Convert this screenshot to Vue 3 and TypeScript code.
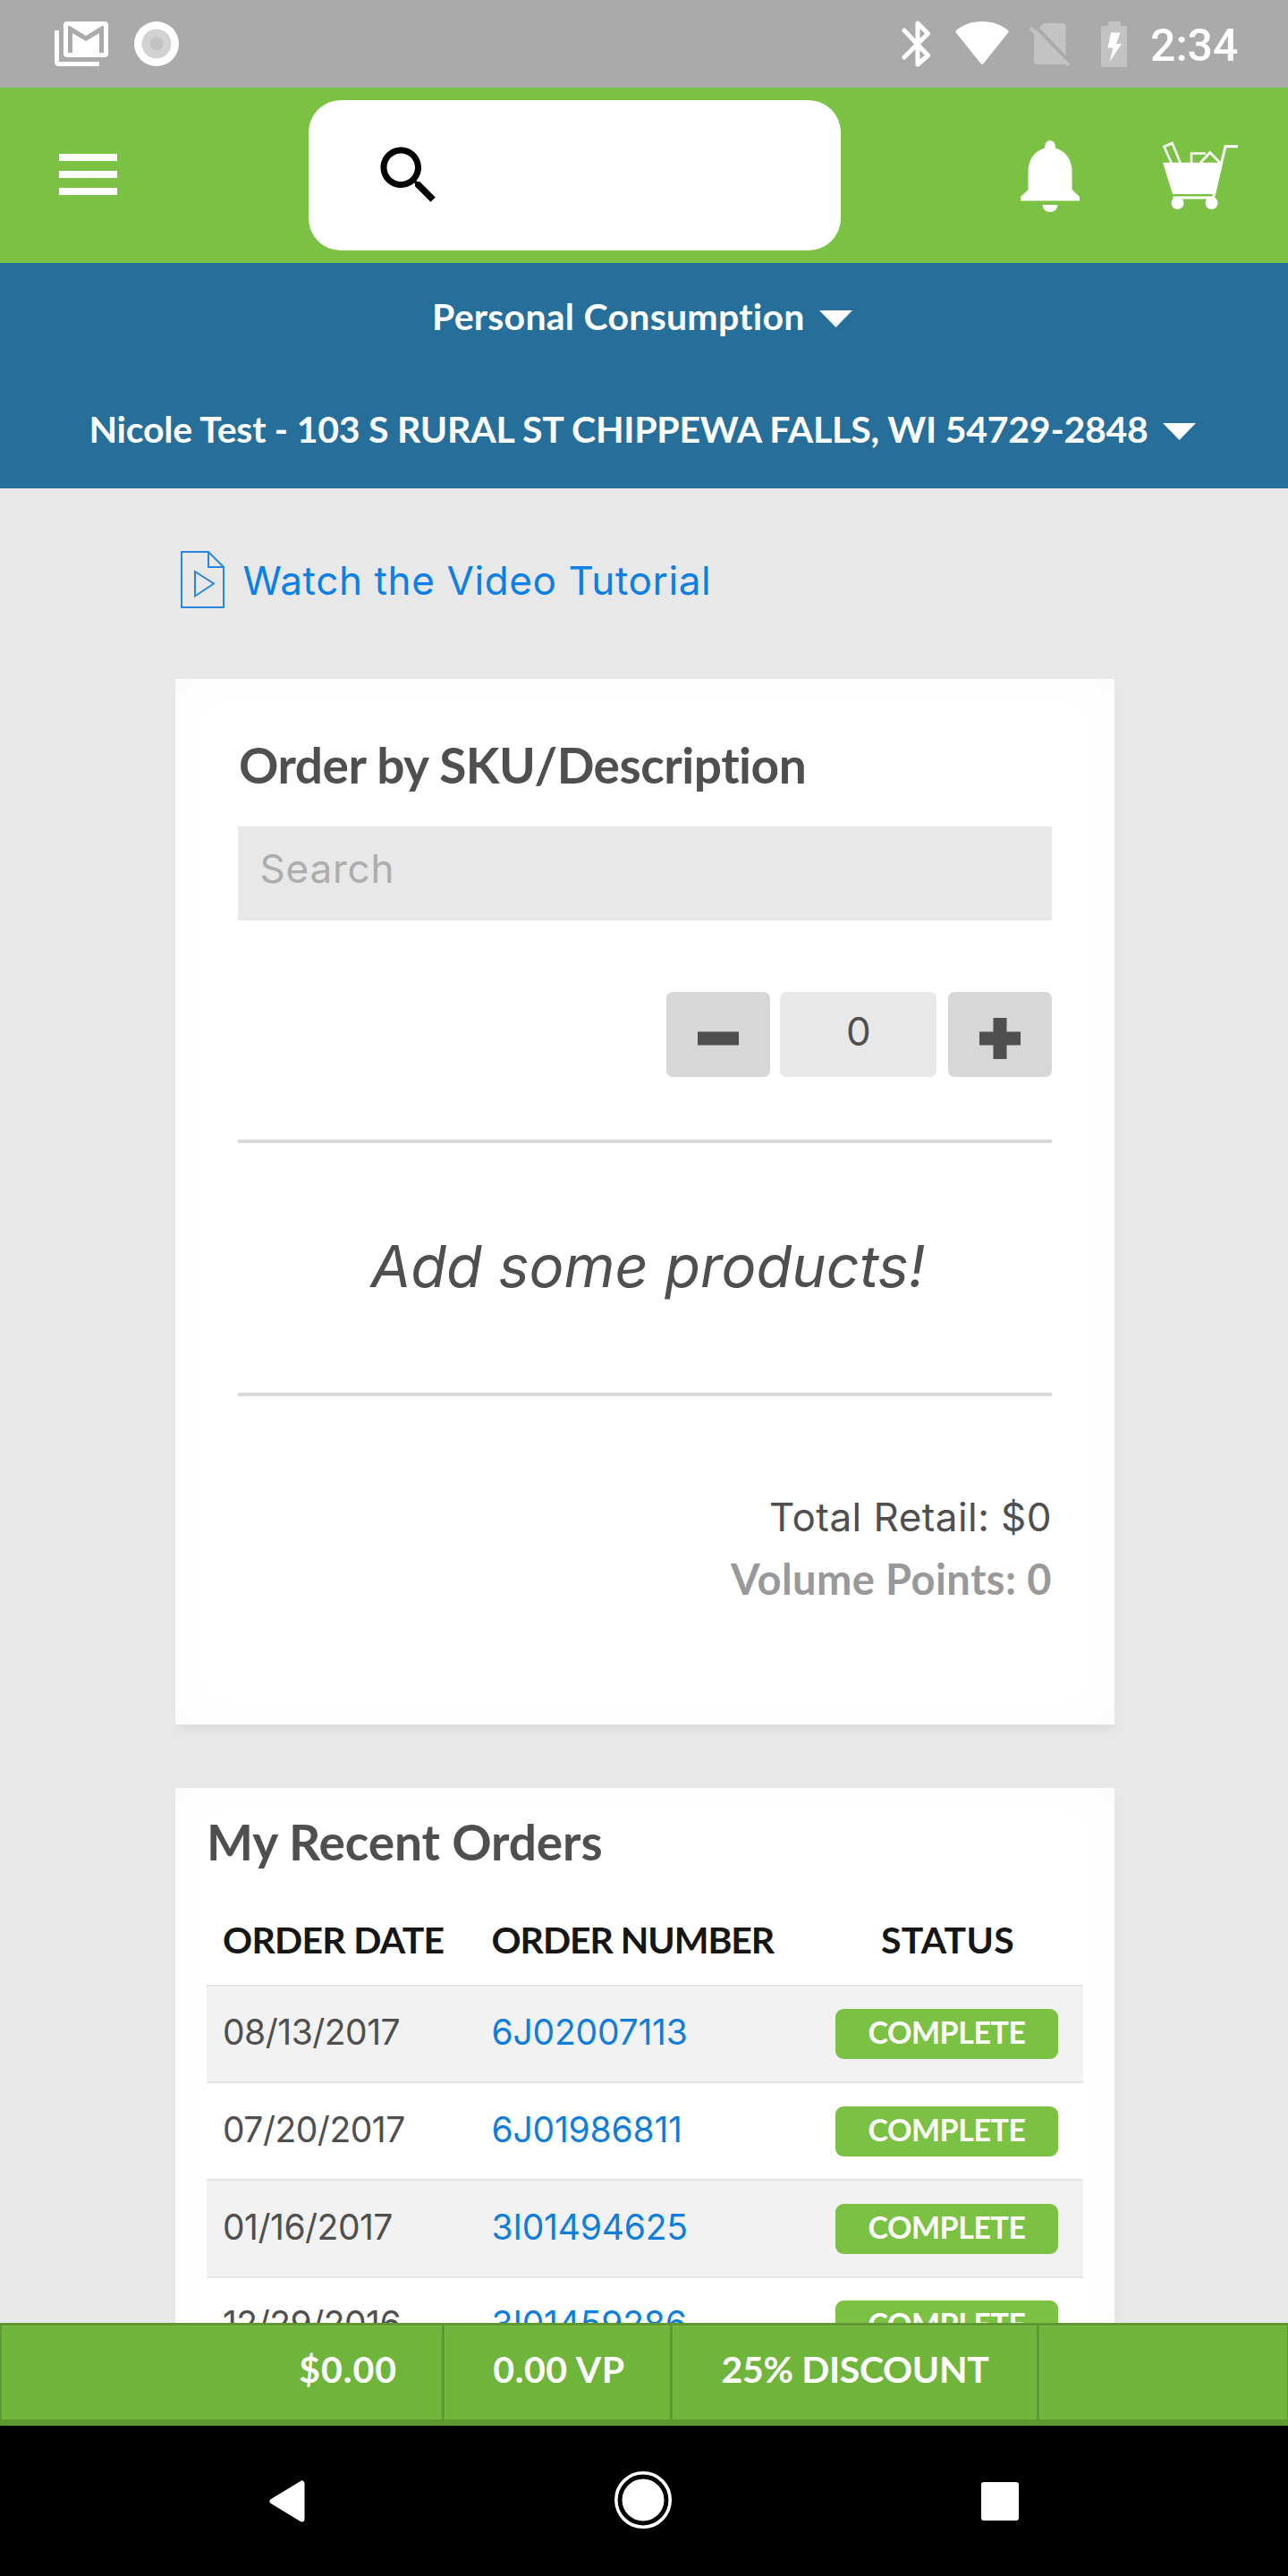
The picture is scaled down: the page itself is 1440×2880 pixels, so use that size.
<script setup lang="ts">
interface Order {
  date: string
  number: string
  status: string
}

const orders: Order[] = [
  { date: '08/13/2017', number: '6J02007113', status: 'COMPLETE' },
  { date: '07/20/2017', number: '6J01986811', status: 'COMPLETE' },
  { date: '01/16/2017', number: '3I01494625', status: 'COMPLETE' },
  { date: '12/29/2016', number: '3I01459286', status: 'COMPLETE' },
]
</script>

<template>
  <div class="screen">
    <div class="statusbar">
      <svg class="st-gmail" width="60" height="50" viewBox="61 24 60 50">
        <path d="M61 34h5v35h45v5H66q-5 0-5-5z" fill="#fff" />
        <rect x="71" y="24" width="50" height="40" rx="4" fill="#fff" />
        <path d="M76 59V29h2l18 11 18-11h2v30h-5V37L96 46 81 37v22z" fill="#aaa" />
      </svg>
      <svg class="st-record" width="50" height="50" viewBox="0 0 50 50">
        <circle cx="25" cy="25" r="25" fill="#fff" />
        <circle cx="25" cy="25" r="16.500" fill="#d2d2d2" />
        <circle cx="25" cy="25" r="7.500" fill="#c2c2c2" />
      </svg>
      <svg class="st-bt" width="32" height="52" viewBox="1008 23 32 52">
        <path d="M1011 34l26.500 28-11.500 10V26l11.500 11.500L1011 64" fill="none" stroke="#fff" stroke-width="5" stroke-linecap="round" stroke-linejoin="round" />
      </svg>
      <svg class="st-wifi" width="62" height="50" viewBox="1067 23 62 50">
        <path d="M1098 24c12 0 22 4 29 10q1 1 .5 2l-28 35q-1.500 1.500-3 0l-28-35q-.5-1 .5-2c7-6 17-10 29-10z" fill="#fff" />
      </svg>
      <svg class="st-sim" width="47" height="50" viewBox="1150 25 47 50">
        <path d="M1167 26h21q3.500 0 3.500 3.500v39q0 3.500-3.500 3.500h-28q-4 0-4-4V36z" fill="#c3c3c3" />
        <path d="M1156.500 28l40 42.500" stroke="#aaa" stroke-width="4" />
        <path d="M1152 31.500l43 41.500" stroke="#c3c3c3" stroke-width="4" />
      </svg>
      <svg class="st-batt" width="30" height="51" viewBox="1231 23 30 51">
        <path d="M1239 23h14v5h5q2 0 2 2v42q0 2-2 2h-25q-2 0-2-2V30q0-2 2-2h6z" fill="#c3c3c3" />
        <path d="M1242 35.500h10.500L1248 48h6l-13.500 20 4-15.500h-6z" fill="#fff" />
      </svg>
      <span class="clock">2:34</span>
    </div>

    <header class="topbar">
      <svg class="menu" width="65" height="46" viewBox="0 0 65 46">
        <path d="M0 0h65v8H0zM0 19h65v8H0zM0 38h65v8H0z" fill="#fff" />
      </svg>
      <div class="searchbox">
        <svg width="84" height="84" viewBox="0 0 24 24">
          <path d="M15.500 14h-.79l-.28-.27C15.410 12.590 16 11.110 16 9.500 16 5.910 13.090 3 9.500 3S3 5.910 3 9.500 5.910 16 9.500 16c1.610 0 3.090-.59 4.230-1.570l.27.28v.79l5 4.990L20.490 19l-4.990-5zm-6 0C7.010 14 5 11.990 5 9.500S7.010 5 9.500 5 14 7.010 14 9.500 11.990 14 9.500 14z" fill="#000" />
        </svg>
      </div>
      <svg class="bell" width="66" height="81" viewBox="1141 157 66 81">
        <path d="M1174 157c4 0 6 4 6 8.500 11 3 18.500 13 18.500 26V212l8.500 8v4.500h-66V220l8.500-8v-20.500c0-13 7.500-23 18.500-26 0-4.500 2-8.500 6-8.500z" fill="#fff" />
        <path d="M1165.500 229h17q-1 8-8.500 8t-8.500-8z" fill="#fff" />
      </svg>
      <svg class="cart" width="86" height="78" viewBox="1299 157 86 78">
        <g fill="none" stroke="#fff" stroke-width="2.600">
          <path d="M1310 183l-8.500-19 9-4 9.500 23" />
          <path d="M1332 182v-10.500h16M1342 182l10.700-11.500L1364 182M1342 182l8-8" />
          <path d="M1384 163.700h-14L1356.500 221h-45" stroke-width="3" />
        </g>
        <path d="M1300 181.700h67L1359 217h-48z" fill="#fff" />
        <circle cx="1316.500" cy="227" r="7" fill="#fff" />
        <circle cx="1354.500" cy="227" r="7" fill="#fff" />
      </svg>
    </header>

    <div class="account">
      <div class="acc-row type">
        <span>Personal Consumption</span>
        <svg width="37" height="19" viewBox="0 0 37 19"><path d="M0 0h37L18.500 19z" fill="#fff" /></svg>
      </div>
      <div class="acc-row address">
        <span>Nicole Test - 103 S RURAL ST CHIPPEWA FALLS, WI 54729-2848</span>
        <svg width="37" height="19" viewBox="0 0 37 19"><path d="M0 0h37L18.500 19z" fill="#fff" /></svg>
      </div>
    </div>

    <main class="content">
      <a class="tutorial">
        <svg width="50" height="64" viewBox="0 0 50 64" fill="none" stroke="#2a86dc" stroke-width="2">
          <path d="M1 1h30l17 17v45H1z" />
          <path d="M31 1v17h17" />
          <path d="M16 23v27.500L37 36.500z" />
        </svg>
        <span>Watch the Video Tutorial</span>
      </a>

      <section class="card order">
        <h2 class="order-title">Order by SKU/Description</h2>
        <div class="sku">Search</div>
        <div class="stepper">
          <button class="step" aria-label="Decrease">
            <svg width="46" height="46" viewBox="0 0 46 46"><path d="M0 15.500h46v15H0z" fill="#4f4f4f" /></svg>
          </button>
          <div class="qty">0</div>
          <button class="step" aria-label="Increase">
            <svg width="46" height="46" viewBox="0 0 46 46"><path d="M15.500 0h15v15.500H46v15H30.500V46h-15V30.500H0v-15h15.500z" fill="#4f4f4f" /></svg>
          </button>
        </div>
        <div class="empty">Add some products!</div>
        <div class="retail">Total Retail: $0</div>
        <div class="points">Volume Points: 0</div>
      </section>

      <section class="card recent">
        <h2 class="recent-title">My Recent Orders</h2>
        <div class="thead">
          <div class="h-date">ORDER DATE</div>
          <div class="h-num">ORDER NUMBER</div>
          <div class="h-status">STATUS</div>
        </div>
        <div v-for="o in orders" :key="o.number" class="trow">
          <div class="c-date">{{ o.date }}</div>
          <a class="c-num">{{ o.number }}</a>
          <div class="c-status"><span class="badge">{{ o.status }}</span></div>
        </div>
      </section>
    </main>

    <footer class="totals">
      <div class="cell amount">$0.00</div>
      <div class="cell vp">0.00 VP</div>
      <div class="cell discount">25% DISCOUNT</div>
      <div class="cell rest"></div>
    </footer>

    <nav class="navbar">
      <svg class="nv-back" width="40" height="47" viewBox="0 0 40 47">
        <path d="M36.500 3.500v40L3.500 23.500z" fill="#fff" stroke="#fff" stroke-width="6" stroke-linejoin="round" />
      </svg>
      <svg class="nv-home" width="64" height="64" viewBox="0 0 64 64">
        <circle cx="32" cy="32" r="30.200" fill="none" stroke="#fff" stroke-width="3.600" />
        <circle cx="32" cy="32" r="23.500" fill="#fff" />
      </svg>
      <svg class="nv-recent" width="42" height="43" viewBox="0 0 42 43">
        <rect width="42" height="43" rx="3" fill="#fff" />
      </svg>
    </nav>
  </div>
</template>

<style>
body {
  margin: 0;
  background: #000;
}
</style>

<style scoped>
.screen {
  width: 1440px;
  height: 2880px;
  display: flex;
  flex-direction: column;
  overflow: hidden;
  background: #e8e8e8;
  font-family: Inter, 'Open Sans', sans-serif;
  color: #4f4f4f;
  white-space: nowrap;
}
.screen * {
  box-sizing: border-box;
}
svg {
  display: block;
  flex: none;
}

.statusbar {
  height: 98px;
  flex: none;
  background: #aaa;
  display: flex;
  align-items: center;
}
.st-gmail { margin-left: 61px; }
.st-record { margin-left: 29px; }
.st-bt { margin-left: 808px; }
.st-wifi { margin: 0 0 2px 27px; }
.st-sim { margin: 2px 0 0 21px; }
.st-batt { margin-left: 34px; }
.clock {
  margin: 4px 0 0 25px;
  font: 500 50px/50px Roboto, sans-serif;
  color: #fff;
}

.topbar {
  height: 196px;
  flex: none;
  background: #7bc143;
  display: flex;
  align-items: flex-start;
}
.menu { margin: 73.500px 0 0 65.500px; }
.searchbox {
  margin: 14px 0 0 214.500px;
  width: 595px;
  height: 168px;
  border-radius: 36px;
  background: #fff;
  padding: 41.500px 0 0 70px;
}
.bell { margin: 59px 0 0 201px; }
.cart { margin: 59px 0 0 91.500px; }

.account {
  height: 252px;
  flex: none;
  background: #266f9b;
  color: #fff;
  font-family: Lato, sans-serif;
  font-weight: 700;
  font-size: 41px;
}
.acc-row {
  display: flex;
  align-items: center;
}
.type {
  height: 118px;
  padding-left: 483px;
  letter-spacing: 0.26px;
}
.type svg { margin: 7px 0 0 16px; }
.address {
  height: 134px;
  padding-left: 99.500px;
  letter-spacing: -0.24px;
}
.address svg { margin: 7px 0 0 16px; }

.content {
  height: 2051px;
  flex: none;
  overflow: hidden;
}
.tutorial {
  display: flex;
  align-items: center;
  height: 64px;
  margin: 70px 0 0 201.500px;
  color: #0a80e6;
  font-size: 44px;
  letter-spacing: 0.62px;
}
.tutorial span { margin: 2px 0 0 20px; }

.card {
  width: 1050px;
  margin-left: 196px;
  background: #fff;
  box-shadow: inset 0 0 60px rgba(0, 0, 0, 0.02), 0 10px 8px -2px rgba(0, 0, 0, 0.04);
}
.order {
  height: 1169px;
  margin-top: 79px;
  padding: 66px 70px 0;
}
h2 {
  margin: 0;
  font: 700 55px/60px Lato, sans-serif;
  font-variant-ligatures: none;
}
.order-title { letter-spacing: -0.48px; padding-left: 1px; }
.sku {
  height: 105px;
  margin-top: 39px;
  padding: 0 0 11px 24.500px;
  display: flex;
  align-items: center;
  background: #e8e8e8;
  color: #adadad;
  font-size: 44px;
  letter-spacing: 0.8px;
}
.stepper {
  margin-top: 80px;
  height: 95px;
  display: flex;
  justify-content: flex-end;
}
.step {
  width: 116px;
  height: 95px;
  border: 0;
  border-radius: 7px;
  background: #d7d7d7;
  padding: 8px 1px 0 0;
  display: flex;
  align-items: center;
  justify-content: center;
}
.qty {
  width: 175px;
  margin: 0 13px 0 11px;
  border-radius: 7px;
  background: #e8e8e8;
  padding: 0 0 8px 1px;
  display: flex;
  align-items: center;
  justify-content: center;
  font-size: 44px;
}
.empty {
  height: 287px;
  margin-top: 70px;
  border: solid #d9d9d9;
  border-width: 4px 0;
  padding: 0 0 4px 7px;
  display: flex;
  align-items: center;
  justify-content: center;
  font-size: 65px;
  font-style: italic;
}
.retail {
  margin-top: 101px;
  line-height: 69px;
  text-align: right;
  font-size: 44px;
  letter-spacing: 0.45px;
}
.points {
  line-height: 68px;
  text-align: right;
  font-family: Lato, sans-serif;
  font-weight: 700;
  font-size: 47px;
  letter-spacing: 0.43px;
  color: #999;
}

.recent {
  height: 800px;
  margin-top: 70.500px;
  padding: 30px 35px 0;
}
.recent-title { letter-spacing: -0.1px; }
.thead,
.trow {
  display: grid;
  grid-template-columns: 300.500px 1fr 305px;
  padding-left: 18px;
}
.thead {
  height: 130px;
  padding-top: 30px;
  align-items: center;
  color: #161616;
  font: 700 41px/50px Lato, sans-serif;
}
.h-date { letter-spacing: -0.72px; }
.h-num { letter-spacing: -1.05px; }
.h-status { text-align: center; letter-spacing: 0.24px; padding-left: 2px; }
.trow {
  height: 108.700px;
  border-top: 2.500px solid #e4e4e4;
  align-items: center;
  font-size: 39px;
}
.trow:nth-child(odd) { background: #f2f2f2; }
.c-date { padding-bottom: 4px; letter-spacing: -0.5px; }
.c-num { padding-bottom: 4px; letter-spacing: -0.2px; color: #0f7edb; }
.c-status {
  display: flex;
  justify-content: center;
  padding-top: 1px;
}
.badge {
  width: 249px;
  height: 56px;
  border-radius: 9px;
  background: #7bc143;
  color: #fff;
  padding-bottom: 4px;
  display: flex;
  align-items: center;
  justify-content: center;
  font: 700 34px/40px Lato, sans-serif;
  letter-spacing: -0.46px;
}

.totals {
  height: 115px;
  flex: none;
  display: flex;
  border: solid #5f9831;
  border-width: 3px 1px 7px 2px;
  background: #6fb43b;
  color: #fff;
  font: 700 41px/50px Lato, sans-serif;
}
.cell {
  display: flex;
  align-items: center;
  justify-content: center;
  padding-bottom: 8px;
  border-right: 3px solid #5f9831;
  box-shadow: inset 1px 1px 0 #7abb49;
}
.amount {
  width: 495px;
  justify-content: flex-end;
  padding-right: 50px;
  letter-spacing: 0.98px;
}
.vp { width: 255px; letter-spacing: 0.58px; padding-left: 4px; }
.discount { width: 410px; letter-spacing: -0.37px; padding-left: 1px; }
.rest { flex: 1; border-right: 0; }

.navbar {
  height: 168px;
  flex: none;
  background: #000;
  display: flex;
  align-items: center;
}
.nv-back { margin-left: 301px; }
.nv-home { margin: 0 0 2px 346px; }
.nv-recent { margin-left: 346px; }
</style>
